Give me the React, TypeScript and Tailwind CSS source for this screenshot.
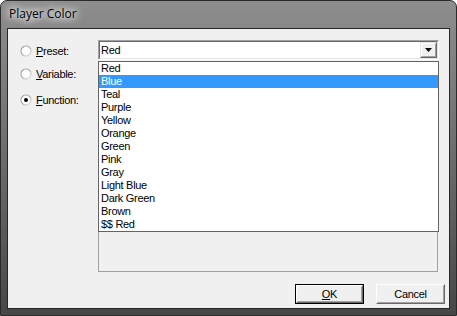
import React from 'react';

const colors = [
  'Red',
  'Blue',
  'Teal',
  'Purple',
  'Yellow',
  'Orange',
  'Green',
  'Pink',
  'Gray',
  'Light Blue',
  'Dark Green',
  'Brown',
  '$$ Red',
];

function Radio({ checked }: { checked?: boolean }) {
  return (
    <svg width="12" height="12" viewBox="0 0 12 12" className="shrink-0">
      <defs>
        <linearGradient id="rg" x1="0" y1="0" x2="1" y2="1">
          <stop offset="0" stopColor="#808080" />
          <stop offset="0.5" stopColor="#a0a0a0" />
          <stop offset="1" stopColor="#f4f4f4" />
        </linearGradient>
      </defs>
      <circle cx="6" cy="6" r="5.5" fill="url(#rg)" />
      <circle cx="6" cy="6" r="4.5" fill="#ffffff" stroke="#d6d6d6" strokeWidth="0.6" />
      {checked && <circle cx="6" cy="6" r="2" fill="#000000" />}
    </svg>
  );
}

function Option({ label, checked, className }: { label: string; checked?: boolean; className?: string }) {
  return (
    <div className={`flex items-center gap-[4px] h-[12px] ${className ?? ''}`}>
      <Radio checked={checked} />
      <span className="leading-none">
        <span className="underline">{label[0]}</span>
        {label.slice(1)}
      </span>
    </div>
  );
}

function Button({ children, isDefault }: { children: React.ReactNode; isDefault?: boolean }) {
  return (
    <div className={`w-[69px] h-[20px] ${isDefault ? 'border border-[#000]' : ''}`}>
      <div className="h-full border border-t-white border-l-white border-b-[#696969] border-r-[#696969] bg-[#f0f0f0]">
        <div className="h-full flex items-center justify-center border border-t-[#f0f0f0] border-l-[#f0f0f0] border-b-[#a0a0a0] border-r-[#a0a0a0]">
          {children}
        </div>
      </div>
    </div>
  );
}

export default function App() {
  return (
    <div className="w-[457px] h-[316px] flex flex-col rounded-t-[7px] border border-[#2a2a2a] bg-linear-to-b from-[#8e8e8e] via-[#6c6c6c] to-[#474747] px-[6px] pb-[6px] font-['Liberation_Sans',Arial,sans-serif] text-[11px] tracking-[-0.3px] text-black">
      <div className="h-[27px] flex items-center pl-[2px] pb-[1px]">
        <span className="font-['Open_Sans',sans-serif] text-[12px] tracking-normal text-black [text-shadow:0_0_6px_#fff,0_0_10px_#fff,0_0_14px_#fff]">
          Player Color
        </span>
      </div>

      <div className="flex-1 border border-[#262626] bg-[#f0f0f0] flex flex-col">
        <div className="flex">
          <div className="w-[90px] pl-[12px] pt-[16px]">
            <Option label="Preset:" />
            <Option label="Variable:" className="mt-[11px]" />
            <Option label="Function:" checked className="mt-[14px]" />
          </div>

          <div className="w-[341px] pt-[11px]">
            <div className="relative">
              <div className="h-[20px] border border-t-[#a0a0a0] border-l-[#a0a0a0] border-b-white border-r-white">
                <div className="h-full flex items-center border border-t-[#696969] border-l-[#696969] border-b-[#e3e3e3] border-r-[#e3e3e3] bg-white">
                  <span className="flex-1 pl-[1px]">Red</span>
                  <div className="w-[17px] h-[16px] border border-t-[#e3e3e3] border-l-[#e3e3e3] border-b-[#696969] border-r-[#696969] bg-[#f0f0f0]">
                    <div className="h-full flex items-center justify-center border border-t-white border-l-white border-b-[#a0a0a0] border-r-[#a0a0a0]">
                      <svg width="7" height="4" viewBox="0 0 7 4">
                        <path d="M0 0h7L3.5 4z" fill="#000" />
                      </svg>
                    </div>
                  </div>
                </div>
              </div>

              <div className="absolute left-0 top-[21px] w-[341px] border border-[#646464] bg-white z-10">
                {colors.map((c) => (
                  <div
                    key={c}
                    className={`h-[13px] leading-[13px] pl-[2px] ${c === 'Blue' ? 'bg-[#3399ff] text-white' : ''}`}
                  >
                    {c}
                  </div>
                ))}
              </div>
            </div>

            <div className="mt-[29px] h-[183px] w-[340px] border border-[#a0a0a0]" />
          </div>
        </div>

        <div className="flex justify-end gap-[12px] pr-[4px] mt-[12px]">
          <Button isDefault>
            <span>
              <span className="underline">O</span>K
            </span>
          </Button>
          <Button>Cancel</Button>
        </div>
      </div>
    </div>
  );
}
